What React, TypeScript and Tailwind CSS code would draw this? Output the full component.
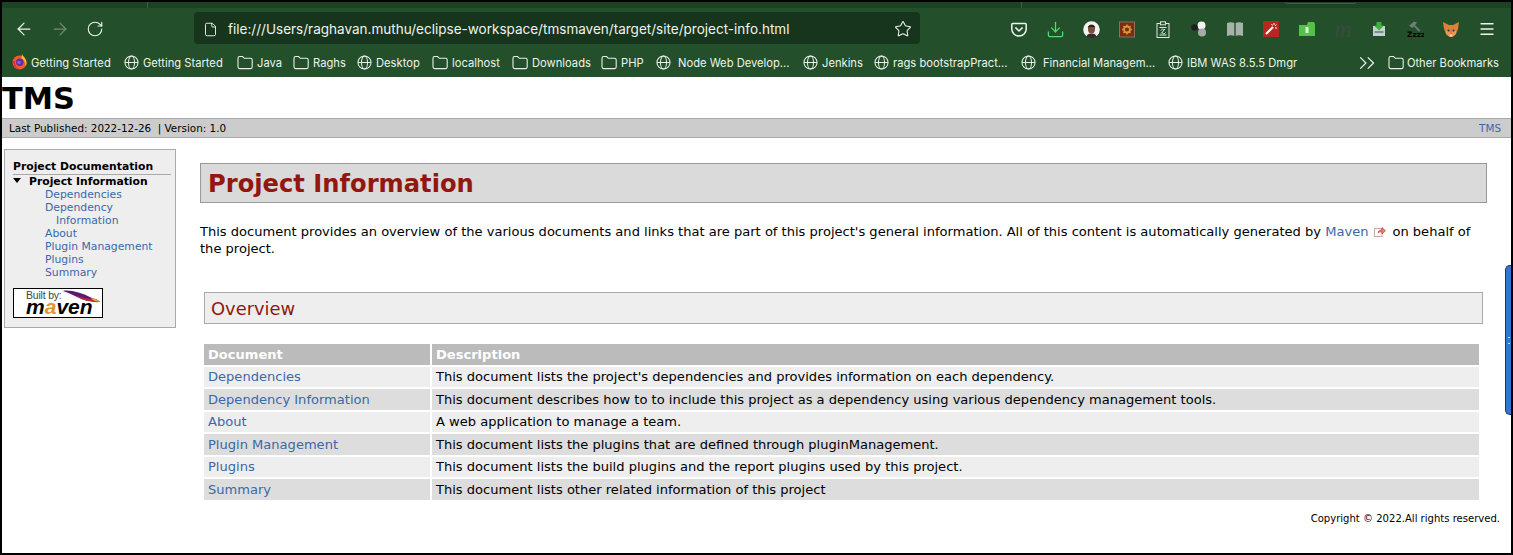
import { ArrowLeft, ArrowRight, RotateCw, File, Star, Menu, ChevronsRight, Download } from 'lucide-react';

const docs = [
  { name: 'Dependencies', text: "This document lists the project's dependencies and provides information on each dependency." },
  { name: 'Dependency Information', text: 'This document describes how to to include this project as a dependency using various dependency management tools.' },
  { name: 'About', text: 'A web application to manage a team.' },
  { name: 'Plugin Management', text: 'This document lists the plugins that are defined through pluginManagement.' },
  { name: 'Plugins', text: 'This document lists the build plugins and the report plugins used by this project.' },
  { name: 'Summary', text: 'This document lists other related information of this project' },
];

const bookmarks = [
  { icon: 'firefox', label: 'Getting Started', w: 'w-[80px]' },
  { icon: 'globe', label: 'Getting Started', w: 'w-[81px]' },
  { icon: 'folder', label: 'Java', w: 'w-[23px]' },
  { icon: 'folder', label: 'Raghs', w: 'w-[31px]' },
  { icon: 'globe', label: 'Desktop', w: 'w-[43px]' },
  { icon: 'folder', label: 'localhost', w: 'w-[47px]' },
  { icon: 'folder', label: 'Downloads', w: 'w-[56px]' },
  { icon: 'folder', label: 'PHP', w: 'w-[22px]' },
  { icon: 'globe', label: 'Node Web Develop...', w: 'w-[115px] pl-[3px]' },
  { icon: 'globe', label: 'Jenkins', w: 'w-[39px]' },
  { icon: 'globe', label: 'rags bootstrapPract...', w: 'w-[115px]' },
  { icon: 'globe', label: 'Financial Managem...', w: 'w-[115px] pl-[3px]' },
  { icon: 'globe', label: 'IBM WAS 8.5.5 Dmgr', w: 'w-[110px]' },
];

function Globe() {
  return (
    <svg className="w-[15px] h-[15px] shrink-0" viewBox="0 0 16 16" fill="none" stroke="#e8efe9" strokeWidth="1.1">
      <circle cx="8" cy="8" r="7" />
      <ellipse cx="8" cy="8" rx="3.2" ry="7" />
      <path d="M1 8h14" />
    </svg>
  );
}

function Folder({ className = '' }: { className?: string }) {
  return (
    <svg className={`w-[16px] h-[15px] shrink-0 ${className}`} viewBox="0 0 16 15" fill="none" stroke="#e8efe9" strokeWidth="1.1">
      <path d="M1 3.2C1 2 1.7 1.5 2.6 1.5H5.6L7.3 3.3H13.6C14.5 3.3 15.2 4 15.2 4.9V12C15.2 13 14.5 13.6 13.6 13.6H2.6C1.7 13.6 1 13 1 12Z" />
    </svg>
  );
}

function FirefoxLogo() {
  return (
    <svg className="w-[15px] h-[17px] shrink-0 -mt-[2px]" viewBox="0 0 15 17">
      <circle cx="7.5" cy="9.5" r="7" fill="#f2592b" />
      <path d="M10 1C10.5 3 12.5 4 13.6 6.5C15 9 14.6 12 13.5 13.5C14 10 12 6.5 9.5 5.5Z" fill="#ffbd2e" />
      <path d="M1 8C1 12 3.500 16 7.500 16C4.500 15 2.500 12 3 8Z" fill="#e6264d" />
      <circle cx="7.800" cy="9.300" r="3.700" fill="#5a2fa8" />
      <circle cx="7" cy="9.500" r="1.800" fill="#8f5ad6" />
    </svg>
  );
}

function ToolIcon({ name }: { name: string }) {
  if (name === 'pocket') {
    return (
      <svg className="w-[16px] h-[15px]" viewBox="0 0 16 15" fill="none" stroke="#f1f5f1" strokeWidth="1.500">
        <path d="M1.700 1.500H14.300C14.800 1.500 15.200 1.900 15.200 2.400V7C15.200 11 12 14 8 14C4 14 .8 11 .8 7V2.400C.8 1.900 1.200 1.500 1.700 1.500Z" />
        <path d="M4.800 5.900L8 9L11.200 5.900" strokeLinecap="round" strokeLinejoin="round" />
      </svg>
    );
  }
  if (name === 'download') return <Download className="w-[19px] h-[19px] text-[#4fdc76]" strokeWidth={1.6} />;
  if (name === 'avatar') {
    return (
      <svg className="w-[17px] h-[17px]" viewBox="0 0 17 17">
        <circle cx="8.500" cy="8.500" r="8.300" fill="#f4f4f4" />
        <path d="M3.500 16C4 13 6 12.500 8.500 12.500S13 13 13.500 16C11 17.500 6 17.500 3.500 16Z" fill="#3a2a25" />
        <ellipse cx="8.500" cy="8" rx="3.500" ry="4.600" fill="#7a4f3c" />
        <path d="M4.800 7C4.500 3 12.500 3 12.200 7C11 5.300 6 5.300 4.800 7Z" fill="#1c1613" />
      </svg>
    );
  }
  if (name === 'gear') {
    return (
      <svg className="w-[16px] h-[17px]" viewBox="0 0 16 17">
        <rect x=".5" y="1" width="15" height="15" fill="#7c2b16" stroke="#8a7158" />
        <circle cx="8" cy="8.500" r="3" fill="none" stroke="#d49a2e" strokeWidth="1.800" />
        <path d="M8 3.500V5M8 12V13.500M3 8.500H4.500M11.500 8.500H13M4.500 5L5.500 6M10.500 11L11.500 12M11.500 5L10.500 6M5.500 11L4.500 12" stroke="#d49a2e" strokeWidth="1.400" />
      </svg>
    );
  }
  if (name === 'clipboard') {
    return (
      <svg className="w-[14px] h-[17px]" viewBox="0 0 14 17" fill="none" stroke="#dfe8e0" strokeWidth="1">
        <rect x="1" y="2.500" width="12" height="14" />
        <rect x="4.500" y=".8" width="5" height="3" fill="#234f2b" />
        <path d="M3.500 6.500H10.500M3.500 14H10.500M5 12.500L9 8M5 9.500C6 7.500 8 8 7.500 9.500M6.500 11.500C6 13 8.500 13.500 9.500 11.500" />
      </svg>
    );
  }
  if (name === 'molecule') {
    return (
      <svg className="w-[16px] h-[16px]" viewBox="0 0 16 16">
        <circle cx="10.500" cy="4.500" r="4" fill="#f2f2f2" />
        <circle cx="11" cy="11.500" r="4" fill="#a9a9a9" />
        <circle cx="3.500" cy="6.500" r="3.300" fill="#1f1f1f" />
      </svg>
    );
  }
  if (name === 'book') {
    return (
      <svg className="w-[16px] h-[14px]" viewBox="0 0 16 14">
        <path d="M0 1C2.500 0 5.500 0 7.300 1V14C5.500 13 2.500 13 0 14ZM8.700 1C10.500 0 13.500 0 16 1V14C13.500 13 10.500 13 8.700 14Z" fill="#a7b3a8" />
      </svg>
    );
  }
  if (name === 'wand') {
    return (
      <svg className="w-[16px] h-[16px]" viewBox="0 0 16 16">
        <rect width="16" height="16" fill="#b5271f" />
        <path d="M3 13L10 6" stroke="#fff" strokeWidth="2.200" />
        <path d="M11 2V4M13.500 3.500L12 5M14 7H12M8.500 3L9.500 4.500" stroke="#fff" />
      </svg>
    );
  }
  if (name === 'greenfolder') {
    return (
      <svg className="w-[16px] h-[14px]" viewBox="0 0 16 14">
        <path d="M0 3H8L9 0H15L16 2V14H0Z" fill="#55c04a" />
        <rect x="6.500" y="5" width="3" height="6" fill="#d8f5d2" />
      </svg>
    );
  }
  if (name === 'm') {
    return <span className="text-[24px] leading-[17px] italic font-['Liberation_Serif',serif] text-[#3f4a41]">m</span>;
  }
  if (name === 'inbox') {
    return (
      <svg className="w-[14px] h-[16px]" viewBox="0 0 14 16">
        <path d="M1 5H13V15H1Z" fill="#c5d0d0" />
        <path d="M2.500 10H11.500V12H2.500Z" fill="#7f8f8f" />
        <path d="M4.500 1H9.500V4.500H12L7 9.500L2 4.500H4.500Z" fill="#3fb03c" />
      </svg>
    );
  }
  if (name === 'hammer') {
    return (
      <svg className="w-[17px] h-[17px]" viewBox="0 0 16 16">
        <path d="M2 4.500L6.500 .5L9.500 1.500L7.500 4L5 6.500Z" fill="#6f7f79" />
        <path d="M6.500 4L12 9.500" stroke="#6b7a75" strokeWidth="1.700" />
        <text x="0" y="15.500" fontSize="7" fontWeight="700" fontFamily="'DejaVu Sans',sans-serif" fill="#050505">Zzzz</text>
      </svg>
    );
  }
  if (name === 'fox') {
    return (
      <svg className="w-[16px] h-[15px]" viewBox="0 0 16 15">
        <path d="M0 0L6 3H10L16 0L15 7L13 12L9.500 15H6.500L3 12L1 7Z" fill="#e07f36" />
        <path d="M3 8L7 10L6.500 15L3 12ZM13 8L9 10L9.500 15L13 12Z" fill="#ee9550" />
        <path d="M6.500 12.500H9.500L8.800 14.500H7.200Z" fill="#f3e5d5" />
        <circle cx="5.500" cy="8.500" r="1" fill="#233447" />
        <circle cx="10.500" cy="8.500" r="1" fill="#233447" />
      </svg>
    );
  }
  return <Menu className="w-[18px] h-[18px] text-[#eef3ee]" strokeWidth={1.7} />;
}

const tools = ['pocket', 'download', 'avatar', 'gear', 'clipboard', 'molecule', 'book', 'wand', 'greenfolder', 'm', 'inbox', 'hammer', 'fox', 'menu'];

function BrowserChrome() {
  return (
    <div className="font-['Inter',sans-serif] text-[#eef3ee]">
      <div className="relative h-[6px] bg-[#1c4224]">
        <div className="absolute left-[145px] top-0 w-px h-[6px] bg-[#3d5f44]" />
        <div className="absolute left-[1019px] top-0 w-px h-[6px] bg-[#3d5f44]" />
        <div className="absolute left-[1283px] top-0 w-[71px] h-[2px] border-b border-x border-[#3d5f44] rounded-b-sm" />
      </div>
      <div className="flex items-end h-[36px] pl-[12px] pr-[6px] bg-[#234f2b]">
        <div className="flex items-center w-[180px] h-[32px] pt-[2px] shrink-0">
          <ArrowLeft className="w-[20px] h-[20px]" strokeWidth={1.5} />
          <ArrowRight className="w-[20px] h-[20px] ml-[16px] text-[#718c76]" strokeWidth={1.5} />
          <RotateCw className="w-[18px] h-[18px] ml-[16px]" strokeWidth={1.5} />
        </div>
        <div className="flex items-center w-[726px] h-[32px] pt-[2px] shrink-0 pl-[9px] pr-[8px] rounded-[4px] bg-[#17351c]">
          <File className="w-[15px] h-[17px]" strokeWidth={1.5} />
          <span className="ml-[10px] flex-1 text-[13.520px] whitespace-nowrap">file:///Users/raghavan.muthu/eclipse-workspace/tmsmaven/target/site/project-info.html</span>
          <Star className="w-[18px] h-[18px]" strokeWidth={1.4} />
        </div>
        <div className="flex ml-[81px]">
          {tools.map((t) => (
            <div key={t} className="flex items-center justify-center w-[36px] h-[32px] pt-[2px]">
              <ToolIcon name={t} />
            </div>
          ))}
        </div>
      </div>
      <div className="flex items-center h-[33px] pt-[5px] pl-[10px] pr-[12px] text-[11.200px] bg-[#234f2b]">
        <div className="flex items-center gap-[13px]">
          {bookmarks.map((b, i) => (
            <div key={i} className="flex items-center gap-[4px]">
              {b.icon === 'firefox' && <FirefoxLogo />}
              {b.icon === 'globe' && <Globe />}
              {b.icon === 'folder' && <Folder />}
              <span className={`${b.w} whitespace-nowrap`}>{b.label}</span>
            </div>
          ))}
        </div>
        <ChevronsRight className="w-[26px] h-[26px] ml-auto" strokeWidth={1.1} />
        <div className="flex items-center gap-[3px] ml-[8px]">
          <Folder />
          <span className="whitespace-nowrap">Other Bookmarks</span>
        </div>
      </div>
    </div>
  );
}

function MavenBadge() {
  return (
    <div className="relative w-[90px] h-[30px] mt-[9px] border border-black bg-white overflow-hidden">
      <span className="absolute left-[12px] top-0 text-[10.500px] leading-[12px] tracking-[-0.2px] font-['Liberation_Sans',sans-serif] text-[#444]">Built by:</span>
      <svg className="absolute left-[47px] top-px w-[41px] h-[13px]" viewBox="0 0 40 14">
        <path d="M0 1C8 -.5 20 3 30 8C34 9.500 38 10 40 13C30 12 24 12 18 9C12 6 6 3 0 1Z" fill="#5a1a72" />
        <path d="M14 6C20 8 26 10 32 9.500C36 9.500 38 11 40 13C32 13.500 22 12 14 6Z" fill="#c8242e" />
        <path d="M30 9C34 9 38 11 40 13C36 12.500 33 12 30 9Z" fill="#eab32a" />
      </svg>
      <span className="absolute left-[12px] top-[12px] text-[21px] leading-[12px] font-bold italic font-['Liberation_Sans',sans-serif] text-black">
        m<span className="text-[#e8912a]">a</span>ven
      </span>
    </div>
  );
}

function Sidebar() {
  return (
    <div className="w-[172px] h-[179px] shrink-0 ml-[2px] mt-[11px] pt-[10px] pl-[8px] pr-[4px] border border-[#aaa] bg-[#eee] text-[10.800px] leading-[13px]">
      <h5 className="font-bold text-[#000] border-b border-[#aaa] pb-px">Project Documentation</h5>
      <div className="relative pl-[16px] font-bold text-black">
        <span className="absolute left-0 top-[3px] w-0 h-0 border-x-[4px] border-t-[5px] border-x-transparent border-t-black" />
        Project Information
      </div>
      <ul className="pl-[32px] text-[#3a68a8] leading-[13px]">
        <li>Dependencies</li>
        <li>Dependency</li>
        <li className="pl-[11px]">Information</li>
        <li>About</li>
        <li>Plugin Management</li>
        <li>Plugins</li>
        <li>Summary</li>
      </ul>
      <MavenBadge />
    </div>
  );
}

function MainContent() {
  return (
    <div className="flex-1 ml-[24px] mr-[24px] mt-[25px] text-[13.060px] leading-[17px] text-black">
      <h2 className="flex items-center h-[40px] pt-[2px] pl-[7px] border border-[#999] bg-[#dadada] text-[24.200px] font-bold text-[#92180f]">Project Information</h2>
      <p className="mt-[20px]">
        This document provides an overview of the various documents and links that are part of this project's general information. All of this content is automatically generated by{' '}
        <span className="text-[#3a68a8]">Maven</span>
        <svg className="inline-block w-[12px] h-[11px] mx-[6px] align-[-1px]" viewBox="0 0 12 11" fill="none">
          <rect x=".5" y="2.500" width="7.500" height="8" stroke="#c9a9a0" />
          <path d="M4 7C4.500 4.500 6 3.800 8 3.800V1.500L11.500 4.800L8 8V5.800C6.500 5.800 5 6 4 7Z" fill="#e8846a" stroke="#a33" strokeWidth=".6" />
        </svg>
        on behalf of the project.
      </p>
      <section className="mx-[4px] mt-[35px]">
        <h3 className="flex items-center h-[32px] pl-[6px] border border-[#aaa] bg-[#eee] text-[17.900px] text-[#92180f]">Overview</h3>
        <div className="grid grid-cols-[226px_1fr] gap-[2px] mt-[20px] mr-[4px]">
          <div className="flex items-center h-[20.500px] px-[4px] bg-[#bbb] font-bold text-white">Document</div>
          <div className="flex items-center h-[20.500px] px-[4px] bg-[#bbb] font-bold text-white">Description</div>
          {docs.map((d, i) => (
            <div key={d.name} className="contents">
              <div className={`flex items-center h-[20.500px] px-[4px] text-[#3a68a8] ${i % 2 === 0 ? 'bg-[#eee]' : 'bg-[#ddd]'}`}>{d.name}</div>
              <div className={`flex items-center h-[20.500px] px-[4px] whitespace-nowrap ${i % 2 === 0 ? 'bg-[#eee]' : 'bg-[#ddd]'}`}>{d.text}</div>
            </div>
          ))}
        </div>
      </section>
    </div>
  );
}

export default function App() {
  return (
    <div className="w-[1513px] h-[555px] p-[2px] bg-black overflow-hidden">
      <div className="relative flex flex-col h-full bg-white overflow-hidden">
        <BrowserChrome />
        <div className="font-['DejaVu_Sans',sans-serif]">
          <h1 className="h-[41px] text-[30.400px] leading-[43px] font-bold text-black">TMS</h1>
          <div className="flex items-center justify-between h-[20px] pt-px pl-[7px] pr-[10px] border-y border-[#aaa] bg-[#ccc] text-[10.400px] text-black">
            <span className="whitespace-pre">Last Published: 2022-12-26  | Version: 1.0</span>
            <span className="text-[#3a68a8]">TMS</span>
          </div>
          <div className="flex items-start">
            <Sidebar />
            <MainContent />
          </div>
          <p className="absolute right-[11px] bottom-[28px] text-[10.050px] leading-[13px] text-black">Copyright © 2022.All rights reserved.</p>
        </div>
        <div className="absolute right-0 top-[263px] flex items-center justify-end w-[6px] h-[150px] pr-[1px] rounded-l-[5px] border-l border-y border-[#1c3a5e] bg-[#2f77cf]">
          <span className="w-[2px] h-[7px] border-y border-white/80" />
        </div>
      </div>
    </div>
  );
}
